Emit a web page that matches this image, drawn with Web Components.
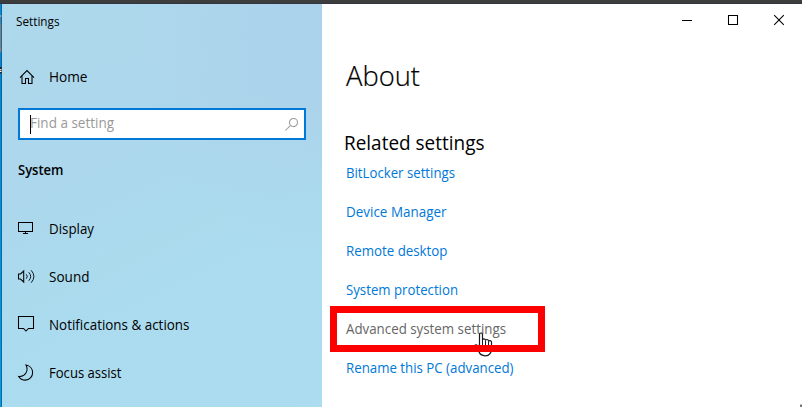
<!DOCTYPE html>
<html lang="en">
<head>
<meta charset="utf-8">
<title>Settings</title>
<style>
html,body{margin:0;height:100%;overflow:hidden}
body{font-family:"Open Sans","Noto Sans",sans-serif;font-size:14px;color:#000}
</style>
</head>
<body>
<settings-window></settings-window>
<script>
const root = (el, html) => { el.attachShadow({mode:'open'}).innerHTML = html; return el.shadowRoot; };

// A single line of text condensed to an exact advance width.
customElements.define('fit-text', class extends HTMLElement {
  connectedCallback() {
    if (this.shadowRoot) return;
    const r = root(this, `<style>:host{display:block;white-space:nowrap}span{display:inline-block;transform-origin:0 50%}</style><span><slot></slot></span>`);
    const s = r.querySelector('span'), w = +this.getAttribute('w');
    s.style.transform = `scaleX(${w / s.getBoundingClientRect().width})`;
  }
});

const ICONS = {
  home: '<path d="M2 9.6 9 2.6 16 9.6M4 8v7.5h3.5v-5h3v5H14V8"/>',
  display: '<path d="M.5 2.5h14v9H.5zM7.5 11.5v2M5 13.5h5" shape-rendering="crispEdges"/>',
  sound: '<path d="M.5 6v5h2l3.2 3v-11l-3.2 3z"/><path d="M8.3 6.3q2 2.2 0 4.4M10.8 4.3q3.8 4.2 0 8.4M13.2 2.3q5.4 6.2 0 12.4" stroke-width=".9"/>',
  notify: '<path d="M.5 .5h15v12h-5l-2.5 2.5-2.5-2.5h-5z"/>',
  moon: '<path d="M8 1C11.8 1.6 14.6 4.7 14.6 8.7c0 4.2-3.2 7.4-7.3 7.4-2.8 0-5.2-1.4-6.6-3.7C6.8 13.3 11.1 7 8 1z"/>',
  search: '<circle cx="8.5" cy="4.5" r="4"/><path d="M5.6 7.4 .4 12.5"/>',
  min: '<path d="M1 8.5h10" shape-rendering="crispEdges"/>',
  max: '<path d="M1.5 3.5h9v9h-9z"/>',
  close: '<path d="M1.2 3.2l9.6 9.6M10.8 3.2 1.2 12.8"/>'
};
customElements.define('ui-icon', class extends HTMLElement {
  connectedCallback() {
    if (this.shadowRoot) return;
    root(this, `<style>:host{display:block;width:18px;height:18px;flex:none}svg{display:block;overflow:visible}</style>
    <svg width="18" height="18" fill="none" stroke="currentColor" stroke-width="1.05">${ICONS[this.getAttribute('name')]}</svg>`);
  }
});

customElements.define('nav-item', class extends HTMLElement {
  connectedCallback() {
    if (this.shadowRoot) return;
    root(this, `<style>:host{display:flex;align-items:center;height:48px;gap:13px;padding-left:16px}::slotted(fit-text){line-height:20px}</style>
    <ui-icon name="${this.getAttribute('icon')}"></ui-icon><slot></slot>`);
  }
});

customElements.define('search-box', class extends HTMLElement {
  connectedCallback() {
    if (this.shadowRoot) return;
    root(this, `<style>:host{display:flex;align-items:center;box-sizing:border-box;height:32px;border:2px solid #0078d7;background:#fff;color:#999;padding-left:10px}
    i{width:1px;height:19px;background:#000;margin-right:-1px;z-index:1}fit-text{flex:1;line-height:20px;margin-top:-2px}ui-icon{width:19px;height:14px;margin-top:1px}</style>
    <i></i><fit-text w="84">Find a setting</fit-text><ui-icon name="search"></ui-icon>`);
  }
});

customElements.define('side-bar', class extends HTMLElement {
  connectedCallback() {
    root(this, `<style>
    :host{display:flex;flex-direction:column;width:320px;flex:none;
      background:radial-gradient(ellipse 190px 230px at 320px 20px,#abd0ebcc 0,#abd0eb00 100%),linear-gradient(155deg,#aed8ec 0%,#acd7ec 35%,#abdbee 62%,#acdcef 100%)}
    .title{font-size:12px;line-height:20px;padding:8px 0 21px 14px}
    search-box{margin:7px 16px 0}
    .head{font-weight:600;line-height:20px;padding:20px 0 25px 16px}
    </style>
    <fit-text class="title" w="43.5">Settings</fit-text>
    <nav-item icon="home"><fit-text w="38.5">Home</fit-text></nav-item>
    <search-box></search-box>
    <fit-text class="head" w="45.5">System</fit-text>
    <nav-item icon="display"><fit-text w="45">Display</fit-text></nav-item>
    <nav-item icon="sound"><fit-text w="40.5">Sound</fit-text></nav-item>
    <nav-item icon="notify"><fit-text w="140.5">Notifications &amp; actions</fit-text></nav-item>
    <nav-item icon="moon"><fit-text w="72.5">Focus assist</fit-text></nav-item>`);
  }
});

customElements.define('hand-cursor', class extends HTMLElement {
  connectedCallback() {
    root(this, `<style>:host{position:absolute;left:144px;top:22px;width:19px;height:26px}svg{display:block}</style>
    <svg width="19" height="26" viewBox="0 0 19 26"><path d="M5.5 15V2.5Q5.5 1 7 1t1.5 1.5V8q0-1.2 1.3-1.2T11.5 8v.5q.2-1 1.5-1t1.5 1.2v.8q.3-.8 1.5-.8t1.5 1.3v7c0 3-1.8 6.8-6.3 6.8-3.6 0-5.6-2-6.5-4.5L1 15.5q-1-1.8.2-2.4 1.2-.6 2.6.6z" fill="#fff" stroke="#17171f" stroke-width="1.2"/><path d="M8.5 8v5M11.5 8.5V13M14.5 9.5V13" stroke="#17171f"/></svg>`);
  }
});

customElements.define('setting-link', class extends HTMLElement {
  connectedCallback() {
    root(this, `<style>
    :host{display:block;position:relative;height:39px;line-height:37px;padding-left:16px;color:#0078d7}
    :host([active]){color:#666}
    .mark{position:absolute;left:0;top:-4px;width:215px;height:46px;box-sizing:border-box;border:7px solid #f00}
    </style><slot></slot>${this.hasAttribute('active') ? '<hand-cursor></hand-cursor><div class="mark"></div>' : ''}`);
  }
});

customElements.define('window-controls', class extends HTMLElement {
  connectedCallback() {
    root(this, `<style>:host{display:flex;justify-content:flex-end;gap:28px;padding:8px 11px 0 0;height:24px}</style>
    <ui-icon name="min"></ui-icon><ui-icon name="max"></ui-icon><ui-icon name="close"></ui-icon>`);
  }
});

customElements.define('about-page', class extends HTMLElement {
  connectedCallback() {
    root(this, `<style>
    :host{display:flex;flex-direction:column;flex:1;background:#fff;padding-left:8px}
    h1,h2{margin:0;font-weight:400}
    h1{font-size:28px;font-weight:300;line-height:36px;padding:21px 0 32px 16px;-webkit-text-stroke:.2px #000}
    h2{font-size:20px;line-height:28px;padding:4px 0 0 13.5px}
    .links{margin-top:-3px}
    </style>
    <window-controls></window-controls>
    <h1><fit-text w="74">About</fit-text></h1>
    <h2><fit-text w="140.5">Related settings</fit-text></h2>
    <div class="links">
    <setting-link><fit-text w="109">BitLocker settings</fit-text></setting-link>
    <setting-link><fit-text w="100.5">Device Manager</fit-text></setting-link>
    <setting-link><fit-text w="101.5">Remote desktop</fit-text></setting-link>
    <setting-link><fit-text w="112">System protection</fit-text></setting-link>
    <setting-link active><fit-text w="160">Advanced system settings</fit-text></setting-link>
    <setting-link><fit-text w="167.5">Rename this PC (advanced)</fit-text></setting-link>
    </div>`);
  }
});

customElements.define('settings-window', class extends HTMLElement {
  connectedCallback() {
    root(this, `<style>
    :host{display:grid;grid-template:4px 403px / 2px 320px 480px;width:802px;height:407px;overflow:hidden;position:relative}
    .top{grid-column:1/-1;background:linear-gradient(#3d3d3d 0 3px,#303540 3px)}
    .desk{background:linear-gradient(90deg,transparent 1px,#07517f99 1px),linear-gradient(#078bd8 0 11px,#8ba8ba 11px 13px,#3a87b5 13px 20px,#6f8291 20px 43px,#9a8b83 46px,#0783d0 49px 63px,#222 63px 65px,#e6ddd8 65px 66px,#b54831 66px 67px,#fff 67px 68px,#222 68px 69px,#0785d5 70px,#0798e0)}
    .grip{position:absolute;right:0;bottom:0;width:2px;height:3px;background:linear-gradient(#bbb 1px,#777 1px)}
    </style><div class="top"></div><div class="desk"></div><side-bar></side-bar><about-page></about-page><div class="grip"></div>`);
  }
});
</script>
</body>
</html>
